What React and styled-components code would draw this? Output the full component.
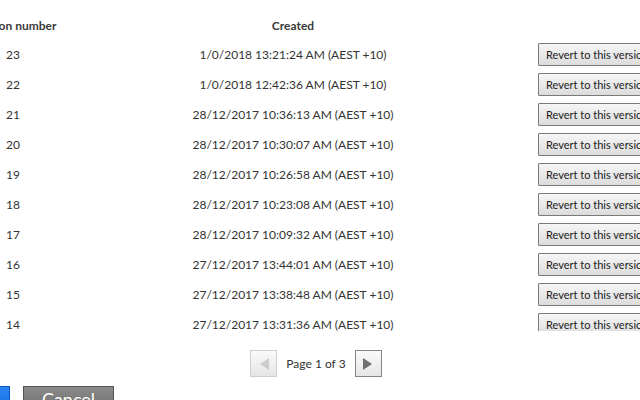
import React from "react";
import styled, { createGlobalStyle } from "styled-components";

const Global = createGlobalStyle`
  html, body { margin: 0; padding: 0; background: #fff; overflow: hidden; }
  body { font-family: "Source Sans Pro", Lato, "Noto Sans", sans-serif; color: #333; }
`;

const Page = styled.div`
  width: 640px;
  height: 400px;
  overflow: hidden;
  display: flex;
  flex-direction: column;
  & > * { flex-shrink: 0; }
`;

const Scroller = styled.div`
  height: 331px;
  overflow: hidden;
  margin-left: -60px;
  width: 760px;
`;

const Table = styled.table`
  border-collapse: collapse;
  table-layout: fixed;
  width: 760px;
  margin-top: 13px;
  font-size: 12px;
`;

const Th = styled.th`
  font-weight: 700;
  height: 26px;
  padding: 0;
  text-align: ${(p) => p.$align || "center"};
  vertical-align: middle;
  line-height: 26px;
  color: #3a3a3a;
`;

const Td = styled.td`
  height: 30px;
  padding: 0;
  text-align: ${(p) => p.$align || "center"};
  vertical-align: middle;
  white-space: nowrap;
`;

const NumCell = styled(Td)`
  text-align: left;
  padding-left: 66px;
`;

const RevertButton = styled.button`
  font-family: inherit;
  font-size: 11px;
  color: #222;
  height: 23px;
  padding: 0 7px;
  margin-left: 40px;
  border: 1px solid #7a7a7a;
  border-radius: 1px;
  background: linear-gradient(#f6f6f6, #dcdcdc);
  white-space: nowrap;
  width: 140px;
  text-align: left;
`;

const Pager = styled.div`
  display: flex;
  align-items: center;
  justify-content: center;
  gap: 8px;
  margin-top: 19px;
  margin-left: -8px;
  font-size: 12px;
`;

const PageBtn = styled.button`
  width: 27px;
  height: 27px;
  padding: 0;
  display: flex;
  align-items: center;
  justify-content: center;
  border: 1px solid ${(p) => (p.disabled ? "#cfcfcf" : "#858585")};
  background: linear-gradient(#fafafa, #e6e6e6);
  border-radius: 0;
`;

const PageLabel = styled.span`
  padding: 0 1px;
`;

const Footer = styled.div`
  display: flex;
  gap: 13px;
  margin-top: 9px;
  margin-left: -80px;
`;

const PrimaryBtn = styled.button`
  width: 90px;
  height: 30px;
  border: 1px solid #0a55c0;
  background: linear-gradient(#2a86f5, #1466de);
  color: #fff;
  font-family: inherit;
  font-size: 15px;
`;

const CancelBtn = styled.button`
  width: 91px;
  height: 30px;
  border: 1px solid #555;
  background: linear-gradient(#8a8a8a, #6a6a6a);
  color: #fff;
  font-family: inherit;
  font-size: 18px;
  padding: 0;
  padding-bottom: 4px;
`;

const Tri = ({ dir, color }) => (
  <svg width="12" height="14" viewBox="0 0 12 14">
    {dir === "left" ? (
      <polygon points="11,1 11,13 2,7" fill={color} />
    ) : (
      <polygon points="1,1 1,13 10,7" fill={color} />
    )}
  </svg>
);

const rows = [
  [23, "1/0/2018 13:21:24 AM (AEST +10)"],
  [22, "1/0/2018 12:42:36 AM (AEST +10)"],
  [21, "28/12/2017 10:36:13 AM (AEST +10)"],
  [20, "28/12/2017 10:30:07 AM (AEST +10)"],
  [19, "28/12/2017 10:26:58 AM (AEST +10)"],
  [18, "28/12/2017 10:23:08 AM (AEST +10)"],
  [17, "28/12/2017 10:09:32 AM (AEST +10)"],
  [16, "27/12/2017 13:44:01 AM (AEST +10)"],
  [15, "27/12/2017 13:38:48 AM (AEST +10)"],
  [14, "27/12/2017 13:31:36 AM (AEST +10)"],
  [13, "27/12/2017 13:20:11 AM (AEST +10)"],
];

export default function App() {
  return (
    <Page>
      <Global />
      <Scroller>
        <Table>
          <colgroup>
            <col style={{ width: 148 }} />
            <col style={{ width: 410 }} />
            <col style={{ width: 202 }} />
          </colgroup>
          <thead>
            <tr>
              <Th $align="left" style={{ paddingLeft: 32 }}>Version number</Th>
              <Th>Created</Th>
              <Th />
            </tr>
          </thead>
          <tbody>
            {rows.map(([n, d]) => (
              <tr key={n}>
                <NumCell>{n}</NumCell>
                <Td>{d}</Td>
                <Td $align="left">
                  <RevertButton>Revert to this version</RevertButton>
                </Td>
              </tr>
            ))}
          </tbody>
        </Table>
      </Scroller>
      <Pager>
        <PageBtn disabled>
          <Tri dir="left" color="#cccccc" />
        </PageBtn>
        <PageLabel>Page 1 of 3</PageLabel>
        <PageBtn>
          <Tri dir="right" color="#6f6f6f" />
        </PageBtn>
      </Pager>
      <Footer>
        <PrimaryBtn>OK</PrimaryBtn>
        <CancelBtn>Cancel</CancelBtn>
      </Footer>
    </Page>
  );
}
